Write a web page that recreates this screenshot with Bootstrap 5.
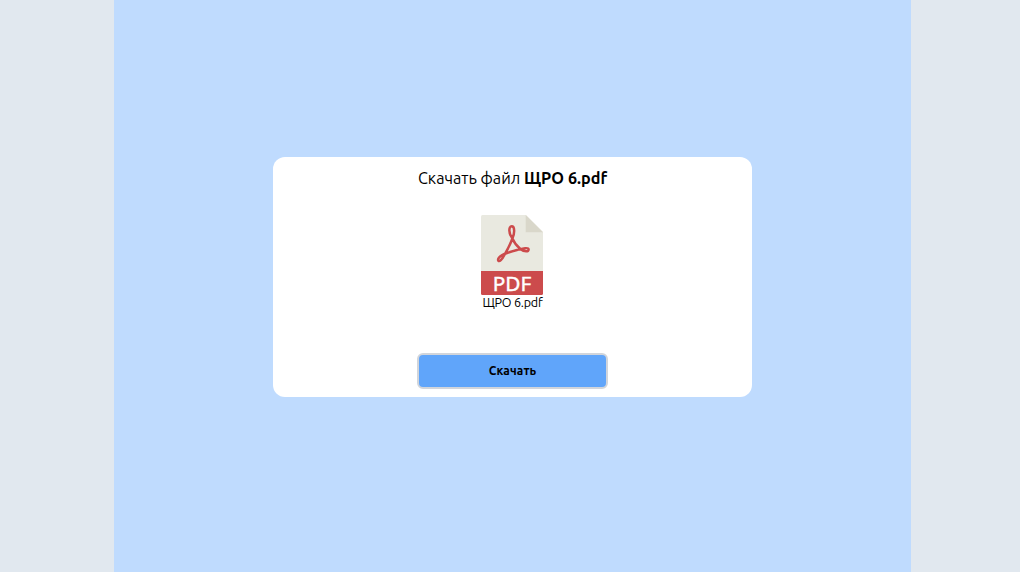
<!DOCTYPE html>
<html lang="ru">
<head>
<meta charset="utf-8">
<meta name="viewport" content="width=device-width, initial-scale=1">
<title>Скачать файл ЩРО 6.pdf</title>
<link href="https://cdn.jsdelivr.net/npm/bootstrap@5.3.0/dist/css/bootstrap.min.css" rel="stylesheet">
<style>
body{background:#e1e8ef;color:#000;font-family:Ubuntu,"Noto Sans",sans-serif;padding-left:5px}
.page-column{width:797px;background:#bfdbfe;padding-top:157px}
.download-card{width:479px;height:240px;border-radius:12px;padding:9px 0 8px}
.download-title{font-size:16.2px;line-height:24px;white-space:nowrap}
.file-tile{margin-top:25px}
.file-name{font-size:12.5px;line-height:14px;white-space:nowrap;letter-spacing:-.2px}
.download-btn{--bs-btn-bg:#60a5fa;--bs-btn-color:#000;--bs-btn-hover-bg:#3b82f6;width:191px;height:36px;border:2px solid #d1d5db;border-radius:6px;font-size:12px;line-height:16px;letter-spacing:.12px}
</style>
</head>
<body>
<main class="page-column min-vh-100 mx-auto">
  <section class="download-card bg-white mx-auto d-flex flex-column align-items-center">
    <h1 class="download-title fw-normal m-0">Скачать файл <strong>ЩРО 6.pdf</strong></h1>
    <div class="file-tile d-flex flex-column align-items-center">
      <svg class="d-block" width="63" height="80" viewBox="0 0 63 80" role="img" aria-label="PDF">
        <path d="M1.5 0H45L62 17V57H0V1.5Q0 0 1.5 0Z" fill="#e9e9e0"/>
        <path d="M44.7 0V17.3H62Z" fill="#d9d7ca"/>
        <path d="M0 56H62V78.5Q62 80 60.5 80H1.5Q0 80 0 78.5Z" fill="#cc4b4c"/>
        <path d="M31.4 23.5C27.4 18.5 27.5 11.3 30.7 11.3S33.8 18.5 31.4 23.5C29.2 29.8 26.1 35.2 23.4 40C20.9 44.8 18.5 46.9 17.3 45.6C16.2 43.6 19.4 40.7 23.4 39C27.3 37.5 32 36 36 35C41.2 33.7 47.3 31.9 47.6 34.4C47.8 37 43.5 37.2 39.3 33.9C35.6 30.8 33.1 27.6 31.4 23.5Z" fill="none" stroke="#cc4b4c" stroke-width="2.5" stroke-linejoin="round"/>
        <text x="11.7" y="75.5" textLength="38.5" lengthAdjust="spacingAndGlyphs" fill="#fff" stroke="#fff" stroke-width=".4" font-family="Noto Sans, sans-serif" font-size="19.5">PDF</text>
      </svg>
      <div class="file-name">ЩРО 6.pdf</div>
    </div>
    <button type="button" class="btn download-btn fw-bold p-0 mt-auto">Скачать</button>
  </section>
</main>
<script src="https://cdn.jsdelivr.net/npm/bootstrap@5.3.0/dist/js/bootstrap.bundle.min.js"></script>
</body>
</html>
